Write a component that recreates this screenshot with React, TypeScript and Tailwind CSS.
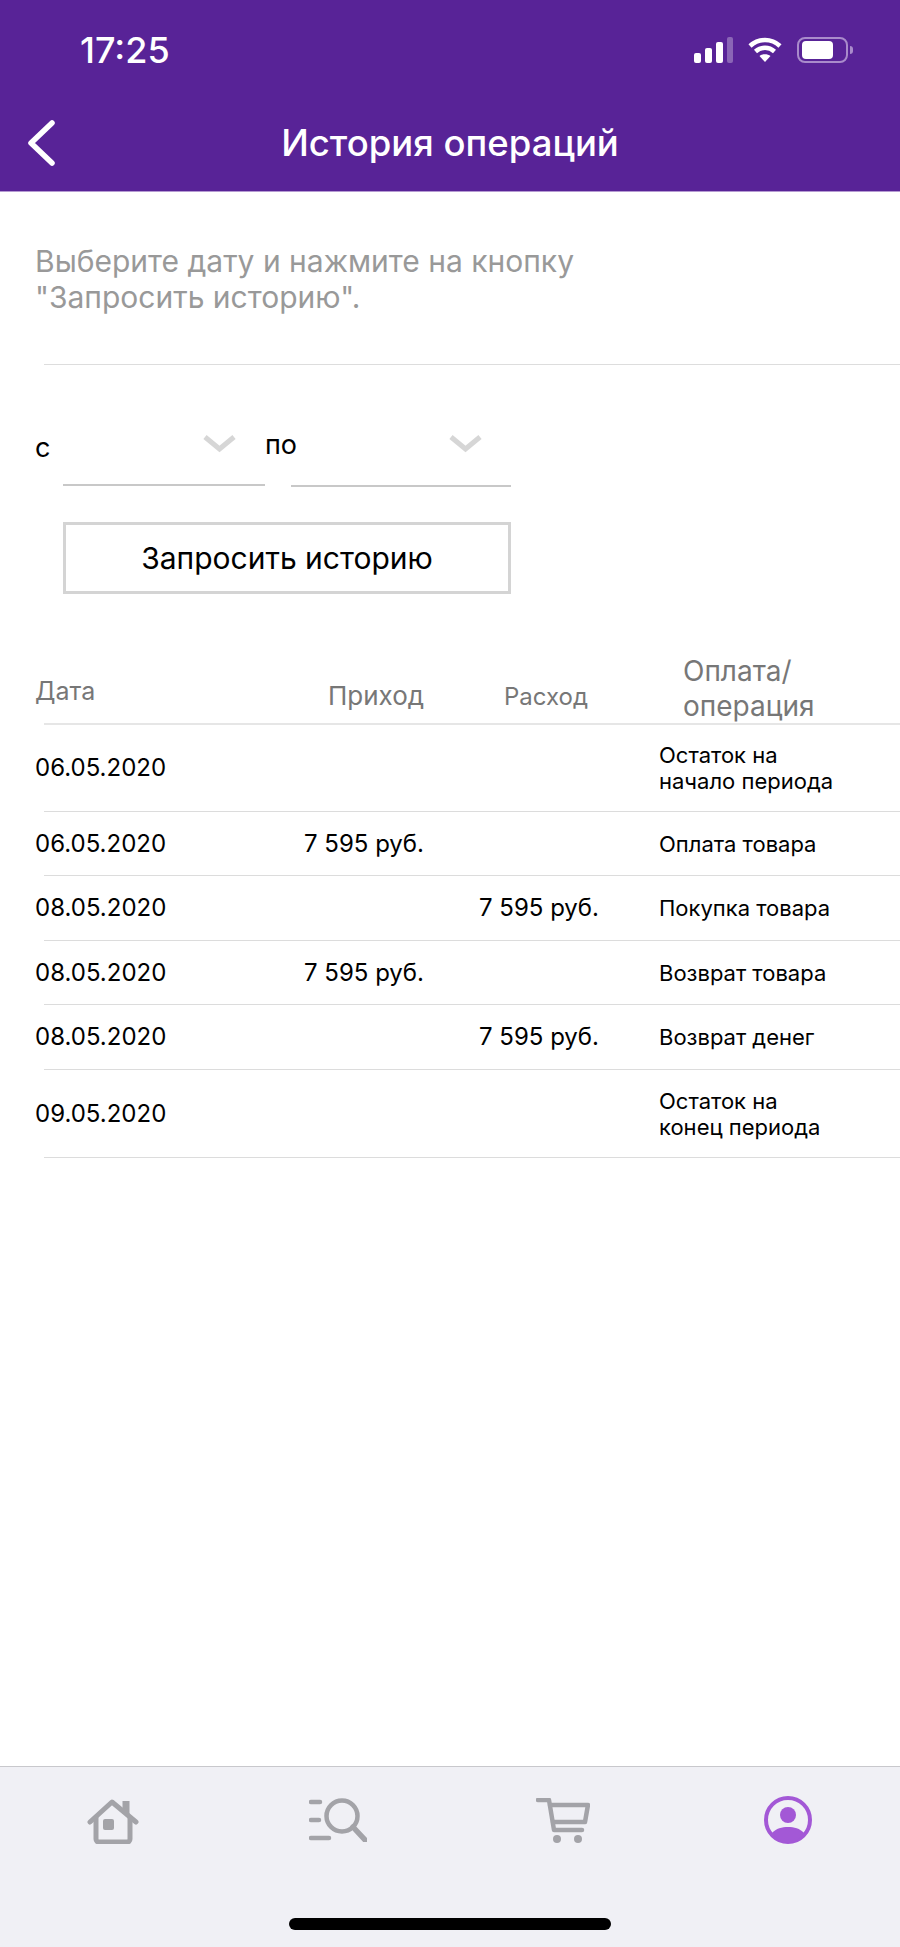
const rows = [
  { date: '06.05.2020', op: ['Остаток на', 'начало периода'], h: 'h-[87px]' },
  { date: '06.05.2020', inc: '7 595 руб.', op: ['Оплата товара'], h: 'h-[64px]' },
  { date: '08.05.2020', exp: '7 595 руб.', op: ['Покупка товара'], h: 'h-[65px]' },
  { date: '08.05.2020', inc: '7 595 руб.', op: ['Возврат товара'], h: 'h-[64px]' },
  { date: '08.05.2020', exp: '7 595 руб.', op: ['Возврат денег'], h: 'h-[65px]' },
  { date: '09.05.2020', op: ['Остаток на', 'конец периода'], h: 'h-[88px]' },
];

function Chevron() {
  return (
    <svg width="33" height="18" viewBox="0 0 33 18" fill="none" stroke="#d6d6d6" strokeWidth="5">
      <path d="M2 2l14.500 12L31 2" />
    </svg>
  );
}

export default function App() {
  return (
    <div className="flex h-[1947px] w-[900px] flex-col overflow-hidden bg-white font-['Inter',sans-serif]">
      <header className="h-[192px] shrink-0 border-b border-[#b59ad2] bg-[#582397] text-white">
        <div className="flex h-[99px] items-center justify-between pl-[80px] pr-[47px]">
          <span className="text-[36px] font-medium leading-none">17:25</span>
          <div className="flex items-center gap-[15px]">
            <svg width="39" height="26" viewBox="0 0 39 26" fill="white">
              <rect x="0" y="16" width="7" height="10" rx="2" />
              <rect x="11" y="11" width="7" height="15" rx="2" />
              <rect x="22" y="5" width="7" height="21" rx="2" />
              <rect x="33" y="0" width="6" height="26" rx="2" fillOpacity="0.3" />
            </svg>
            <svg width="34" height="25" viewBox="0 0 34 25" fill="none" stroke="white" strokeWidth="4.500">
              <path d="M2 9C10.500 1 23.500 1 32 9" />
              <path d="M7.500 14.500C13 9.500 21 9.500 26.500 14.500" />
              <path d="M17 25l-5.500-6C14.500 16.500 19.500 16.500 22.500 19z" fill="white" stroke="none" />
            </svg>
            <div className="flex items-center gap-[2px]">
              <div className="flex h-[26px] w-[51px] items-center rounded-[8px] border-2 border-[#a98bcb] pl-[3px]">
                <div className="h-[18px] w-[31px] rounded-[4px] bg-white" />
              </div>
              <div className="h-[8px] w-[3px] rounded-r-full bg-[#a98bcb]" />
            </div>
          </div>
        </div>
        <div className="relative flex h-[92px] items-center justify-center pb-[4px]">
          <svg className="absolute left-[26px] top-[20px]" width="31" height="48" viewBox="0 0 31 48" fill="none" stroke="white" strokeWidth="5.500" strokeLinecap="round" strokeLinejoin="round">
            <path d="M26 4L5 24l21 20" />
          </svg>
          <h1 className="text-[36.500px] font-medium leading-none">История операций</h1>
        </div>
      </header>

      <main className="flex-1">
        <p className="pl-[35px] pt-[51px] text-[30px] leading-[36px] text-[#999999]">
          Выберите дату и нажмите на кнопку
          <br />
          "Запросить историю".
        </p>
        <div className="ml-[44px] mt-[49px] border-b border-[#dddddd]" />

        <div className="mt-[56px] flex h-[65px] pl-[35px] text-[27px] leading-none text-black">
          <span className="w-[28px] pt-[13px]">с</span>
          <div className="flex w-[202px] items-start justify-end border-b-2 border-[#c8c8c8] pr-[29px] pt-[14px]">
            <Chevron />
          </div>
          <span className="ml-0 w-[26px] pt-[10px]">по</span>
          <div className="flex w-[220px] translate-y-px items-start justify-end border-b-2 border-[#c8c8c8] pr-[29px] pt-[13px]">
            <Chevron />
          </div>
        </div>

        <button className="ml-[63px] mt-[36px] flex h-[72px] w-[448px] items-center justify-center border-[3.5px] border-[#d4d4d4] text-[30px] text-black">
          Запросить историю
        </button>

        <div className="ml-[44px] mt-[57px] flex h-[74px] border-b-2 border-[#e6e6e6] text-[#777777]">
          <span className="ml-[-9px] w-[293px] pt-[22px] text-[25px] leading-[36px]">Дата</span>
          <span className="w-[176px] pt-[27px] text-[26px] leading-[36px]">Приход</span>
          <span className="w-[179px] pt-[28px] text-[24px] leading-[36px]">Расход</span>
          <span className="mt-[3px] text-[28px] leading-[35px]">
            Оплата/
            <br />
            операция
          </span>
        </div>

        {rows.map((r, i) => (
          <div key={i} className={`ml-[44px] flex items-center border-b border-[#dcdcdc] text-black ${r.h}`}>
            <span className="ml-[-9px] w-[269px] text-[24px]">{r.date}</span>
            <span className="w-[175px] text-[24px]">{r.inc}</span>
            <span className="w-[180px] text-[24px]">{r.exp}</span>
            <span className="text-[22px] leading-[26px]">
              {r.op.map((l) => (
                <span key={l} className="block">{l}</span>
              ))}
            </span>
          </div>
        ))}
      </main>

      <footer className="relative h-[181px] shrink-0 border-t border-[#c8c8cc] bg-[#f0f0f5]">
        <div className="grid grid-cols-4 pt-[31px]">
          <div className="flex justify-center">
            <svg width="52" height="46" viewBox="0 0 52 46" fill="none" stroke="#a3a3a8" strokeWidth="5" strokeLinecap="round" strokeLinejoin="round">
              <path d="M3 24L25 4l24 20" />
              <path d="M9 20v21a3 3 0 0 0 3 3h28a3 3 0 0 0 3-3V20" />
              <path d="M39 3v13" strokeWidth="7" strokeLinecap="butt" />
              <rect x="16" y="21" width="11" height="11" rx="2" fill="#a3a3a8" stroke="none" />
            </svg>
          </div>
          <div className="flex justify-center">
            <svg width="58" height="44" viewBox="0 0 58 44" fill="none" stroke="#a3a3a8" strokeWidth="4.500" strokeLinecap="round">
              <path d="M2 4h9M2 22h8M2 40h18" />
              <circle cx="33" cy="18" r="15.500" />
              <path d="M44 29l12 13" strokeWidth="5.500" />
            </svg>
          </div>
          <div className="flex justify-center">
            <svg width="54" height="46" viewBox="0 0 54 46" fill="none" stroke="#a3a3a8" strokeWidth="4.500" strokeLinecap="round" strokeLinejoin="round">
              <path d="M2 2h11l5 30h28" />
              <path d="M14 7h38l-3 17H17" />
              <circle cx="21" cy="41" r="4" fill="#a3a3a8" stroke="none" />
              <circle cx="42" cy="41" r="4" fill="#a3a3a8" stroke="none" />
            </svg>
          </div>
          <div className="flex justify-center">
            <svg className="-mt-[2px]" width="48" height="48" viewBox="0 0 48 48" fill="none">
              <circle cx="24" cy="24" r="22" stroke="#a358d6" strokeWidth="4" />
              <circle cx="24" cy="19" r="8" fill="#a358d6" />
              <path d="M8 37c4-4.500 10-6 16-6s12 1.500 16 6c-4 6-10 10-16 10S12 43 8 37z" fill="#a358d6" />
            </svg>
          </div>
        </div>
        <div className="absolute bottom-[17px] left-[289px] h-[12px] w-[322px] rounded-full bg-black" />
      </footer>
    </div>
  );
}
